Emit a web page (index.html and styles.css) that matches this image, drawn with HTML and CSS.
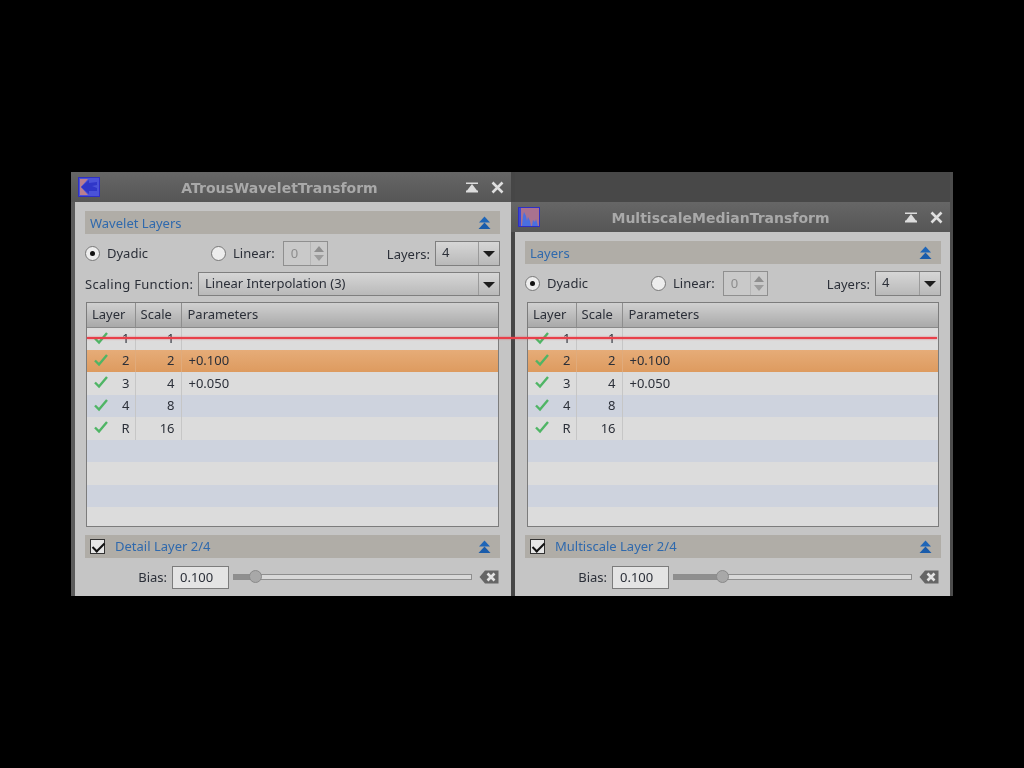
FILE: index.html
```html
<!DOCTYPE html>
<html lang="en">
<head>
  <meta charset="UTF-8" />
  <title>Wavelet and median transform</title>
  <link rel="stylesheet" href="styles.css">
</head>
<body>
  <svg class="defs" width="0" height="0">
    <defs>
      <symbol id="check" viewBox="0 0 16 14">
        <path d="M2 7.5 L6 11.5 L14 2" fill="none" stroke="#4fb565" stroke-width="2.4"/>
      </symbol>
      <symbol id="shade" viewBox="0 0 14 11">
        <path d="M1 0.5 H13 V2 H1 Z M7 2 L12 8.5 H2 Z M1 8.5 H13 V10.5 H1 Z" fill="#dcdcdc"/>
      </symbol>
      <symbol id="close" viewBox="0 0 13 13">
        <path d="M1.5 1.5 L11.5 11.5 M11.5 1.5 L1.5 11.5" stroke="#dedede" stroke-width="2.6" fill="none"/>
      </symbol>
      <symbol id="collapse" viewBox="0 0 13 14">
        <path d="M6.5 0.5 L12 6.5 H1 Z" fill="#1f66b8"/>
        <path d="M6.5 6.5 L12.5 13 H0.5 Z" fill="#1a5cab"/>
      </symbol>
      <symbol id="clear" viewBox="0 0 20 14">
        <path d="M6 0.5 H19.5 V13.5 H6 L0.5 7 Z" fill="#666"/>
        <path d="M8.5 3.5 L15.5 10.5 M15.5 3.5 L8.5 10.5" stroke="#e4e4e4" stroke-width="2.6" fill="none"/>
      </symbol>
    </defs>
  </svg>

  <div class="stage">
    <section class="window window-left">
      <div class="titlebar">
        <svg class="app-icon" viewBox="0 0 22 20">
          <rect x="0.5" y="0.5" width="21" height="19" fill="#4a52d8" stroke="#2e2fc4"/>
          <path d="M2 2 H10 L3 10 L10 18 H2 Z" fill="#b97f8f"/>
          <path d="M3 10 L11 3 V6 L19 5 V8 L14 9 L19 11 V14 L11 14 V17 Z" fill="#2f36c8"/>
        </svg>
        <span class="title">ATrousWaveletTransform</span>
        <svg class="btn-shade"><use href="#shade"/></svg>
        <svg class="btn-close"><use href="#close"/></svg>
      </div>
      <div class="body">
        <div class="section">
          <span class="section-name">Wavelet Layers</span>
          <svg class="collapse"><use href="#collapse"/></svg>
        </div>
        <div class="row row-options">
          <span class="radio radio-on"></span><span class="opt-label">Dyadic</span>
          <span class="radio radio-linear"></span><span class="opt-label">Linear:</span>
          <div class="spin"><span class="spin-value">0</span><span class="spin-btns"><i class="up"></i><i class="down"></i></span></div>
          <span class="layers-label">Layers:</span>
          <div class="combo combo-layers"><span class="combo-value">4</span><span class="combo-arrow"></span></div>
        </div>
        <div class="row row-scaling">
          <span class="scaling-label">Scaling Function:</span>
          <div class="combo combo-wide"><span class="combo-value">Linear Interpolation (3)</span><span class="combo-arrow"></span></div>
        </div>
        <div class="table-box">
          <table class="layers">
            <thead>
              <tr><th class="col-layer">Layer</th><th class="col-scale">Scale</th><th>Parameters</th></tr>
            </thead>
            <tbody>
              <tr><td class="col-layer"><svg class="check"><use href="#check"/></svg>1</td><td class="col-scale">1</td><td></td></tr>
              <tr class="selected"><td class="col-layer"><svg class="check"><use href="#check"/></svg>2</td><td class="col-scale">2</td><td>+0.100</td></tr>
              <tr><td class="col-layer"><svg class="check"><use href="#check"/></svg>3</td><td class="col-scale">4</td><td>+0.050</td></tr>
              <tr class="alt"><td class="col-layer"><svg class="check"><use href="#check"/></svg>4</td><td class="col-scale">8</td><td></td></tr>
              <tr><td class="col-layer"><svg class="check"><use href="#check"/></svg>R</td><td class="col-scale">16</td><td></td></tr>
            </tbody>
          </table>
          <div class="empty-row alt"></div>
          <div class="empty-row"></div>
          <div class="empty-row alt"></div>
          <div class="empty-row"></div>
        </div>
        <div class="section section-detail">
          <span class="checkbox"></span>
          <span class="section-name">Detail Layer 2/4</span>
          <svg class="collapse"><use href="#collapse"/></svg>
        </div>
        <div class="row row-bias">
          <span class="bias-label">Bias:</span>
          <span class="bias-field">0.100</span>
          <div class="slider"><span class="slider-fill slider-fill-left"></span><span class="thumb thumb-left"></span></div>
          <svg class="clear"><use href="#clear"/></svg>
        </div>
      </div>
    </section>

    <section class="window window-right">
      <div class="titlebar">
        <svg class="app-icon" viewBox="0 0 22 20">
          <rect x="0.5" y="0.5" width="21" height="19" fill="#a9728f" stroke="#2e2fc4"/>
          <path d="M1 1 H3 V19 H1 Z" fill="#3a48d8"/>
          <path d="M4 19 L5 9 L6 5 L8 9 L9 14 L10 10 L12 14 L13 19 Z M14 19 L15 13 L17 15 L18 12 L20 19 Z" fill="#4a6fe0"/>
        </svg>
        <span class="title">MultiscaleMedianTransform</span>
        <svg class="btn-shade"><use href="#shade"/></svg>
        <svg class="btn-close"><use href="#close"/></svg>
      </div>
      <div class="body">
        <div class="section">
          <span class="section-name">Layers</span>
          <svg class="collapse"><use href="#collapse"/></svg>
        </div>
        <div class="row row-options">
          <span class="radio radio-on"></span><span class="opt-label">Dyadic</span>
          <span class="radio radio-linear"></span><span class="opt-label">Linear:</span>
          <div class="spin"><span class="spin-value">0</span><span class="spin-btns"><i class="up"></i><i class="down"></i></span></div>
          <span class="layers-label">Layers:</span>
          <div class="combo combo-layers"><span class="combo-value">4</span><span class="combo-arrow"></span></div>
        </div>
        <div class="table-box">
          <table class="layers">
            <thead>
              <tr><th class="col-layer">Layer</th><th class="col-scale">Scale</th><th>Parameters</th></tr>
            </thead>
            <tbody>
              <tr><td class="col-layer"><svg class="check"><use href="#check"/></svg>1</td><td class="col-scale">1</td><td></td></tr>
              <tr class="selected"><td class="col-layer"><svg class="check"><use href="#check"/></svg>2</td><td class="col-scale">2</td><td>+0.100</td></tr>
              <tr><td class="col-layer"><svg class="check"><use href="#check"/></svg>3</td><td class="col-scale">4</td><td>+0.050</td></tr>
              <tr class="alt"><td class="col-layer"><svg class="check"><use href="#check"/></svg>4</td><td class="col-scale">8</td><td></td></tr>
              <tr><td class="col-layer"><svg class="check"><use href="#check"/></svg>R</td><td class="col-scale">16</td><td></td></tr>
            </tbody>
          </table>
          <div class="empty-row alt"></div>
          <div class="empty-row"></div>
          <div class="empty-row alt"></div>
          <div class="empty-row"></div>
        </div>
        <div class="section section-detail">
          <span class="checkbox"></span>
          <span class="section-name">Multiscale Layer 2/4</span>
          <svg class="collapse"><use href="#collapse"/></svg>
        </div>
        <div class="row row-bias">
          <span class="bias-label">Bias:</span>
          <span class="bias-field">0.100</span>
          <div class="slider"><span class="slider-fill slider-fill-right"></span><span class="thumb thumb-right"></span></div>
          <svg class="clear"><use href="#clear"/></svg>
        </div>
      </div>
    </section>

    <div class="red-line"></div>
  </div>
</body>
</html>
```

FILE: styles.css
```css
* {
  box-sizing: border-box;
}

body {
  margin: 0;
  height: 768px;
  overflow: hidden;
  background: #000;
  font-family: "Noto Sans", Arial, sans-serif;
  font-size: 13px;
  color: #2b2f38;
}

.defs {
  position: absolute;
}

.stage {
  position: relative;
  display: flex;
  width: 882px;
  height: 424px;
  margin: 172px 0 0 71px;
  filter: blur(0.5px);
}

/* windows */
.window {
  display: flex;
  flex-direction: column;
  height: 424px;
  background: #c5c5c5;
}

.window-left {
  width: 440px;
  border-left: 4px solid #5c5c5c;
}

.window-right {
  width: 442px;
  padding-top: 30px;
  background: linear-gradient(#484848 30px, #c5c5c5 30px);
  border-left: 4px solid #464646;
  border-right: 3px solid #4c4c4c;
}

.window-right .body {
  padding: 9px 9px 0 10px;
}

.titlebar {
  display: flex;
  flex: none;
  align-items: center;
  height: 30px;
  margin-left: -4px;
  padding: 0 7px;
  background: linear-gradient(#666, #565656);
}

.app-icon {
  flex: none;
  width: 22px;
  height: 20px;
}

.title {
  flex: 1;
  padding: 2px 6px 0 0;
  text-align: center;
  font-family: "DejaVu Sans", sans-serif;
  font-weight: bold;
  font-size: 14px;
  color: #a9a9a9;
}

.window-right .title {
  padding-right: 3px;
}

.btn-shade {
  width: 14px;
  height: 11px;
  margin-right: 12px;
}

.btn-close {
  width: 13px;
  height: 13px;
}

.body {
  flex: 1;
  padding: 9px 11px 0 10px;
}

/* section bars */
.section {
  display: flex;
  align-items: center;
  height: 23px;
  padding: 0 9px 0 5px;
  background: #b0ada7;
}

.section-name {
  flex: 1;
  color: #2f69ad;
}

.collapse {
  width: 13px;
  height: 14px;
}

.section-detail {
  margin-top: 8px;
}

.section-detail .section-name {
  padding-bottom: 1px;
}

.checkbox {
  position: relative;
  width: 15px;
  height: 15px;
  margin-right: 10px;
  background: #e6e6e6;
  border: 1px solid #333;
}

.checkbox::after {
  content: "";
  position: absolute;
  left: 4px;
  top: 0;
  width: 5px;
  height: 10px;
  border: solid #111;
  border-width: 0 2px 2px 0;
  transform: rotate(45deg);
}

/* form rows */
.row {
  display: flex;
  align-items: center;
}

.row-options {
  height: 25px;
  margin-top: 7px;
}

.radio {
  flex: none;
  position: relative;
  width: 15px;
  height: 15px;
  margin-right: 7px;
  border: 1px solid #777;
  border-radius: 50%;
  background: #ededed;
}

.radio-on::after {
  content: "";
  position: absolute;
  left: 4px;
  top: 4px;
  width: 5px;
  height: 5px;
  border-radius: 50%;
  background: #111;
}

.radio-linear {
  margin-left: 63px;
}

.opt-label {
  line-height: 25px;
}

.spin {
  display: flex;
  width: 45px;
  height: 25px;
  margin-left: 8px;
  border: 1px solid #8f8f8f;
  background: #c9c9c9;
}

.spin-value {
  flex: 1;
  padding-left: 7px;
  line-height: 23px;
  color: #8d8d8d;
}

.spin-btns {
  display: flex;
  flex-direction: column;
  align-items: center;
  justify-content: center;
  gap: 3px;
  width: 17px;
  border-left: 1px solid #b5b5b5;
}

.spin-btns i {
  width: 0;
  height: 0;
  border-left: 5px solid transparent;
  border-right: 5px solid transparent;
}

.spin-btns .up {
  border-bottom: 6px solid #8f8f8f;
}

.spin-btns .down {
  border-top: 6px solid #9c9c9c;
}

.layers-label {
  margin-left: auto;
  margin-right: 5px;
}

.combo {
  display: flex;
  height: 25px;
  border: 1px solid #7f7f7f;
  background: linear-gradient(#d6d6d6, #b9b9b9);
}

.combo-layers {
  width: 65px;
}

.window-right .combo-layers {
  width: 66px;
}

.combo-wide {
  flex: 1;
  height: 24px;
}

.combo-value {
  flex: 1;
  padding-left: 6px;
  line-height: 21px;
}

.combo-arrow {
  position: relative;
  width: 21px;
  border-left: 1px solid #9a9a9a;
}

.combo-arrow::after {
  content: "";
  position: absolute;
  left: 4px;
  top: 9px;
  border-left: 6px solid transparent;
  border-right: 6px solid transparent;
  border-top: 6px solid #1c1c1c;
}

.row-scaling {
  margin-top: 6px;
}

.scaling-label {
  width: 113px;
  padding-bottom: 1px;
  letter-spacing: 0.3px;
}

/* table */
.table-box {
  height: 225px;
  margin: 6px 1px 0;
  border: 1px solid #7c7c7c;
  background: #dcdcdc;
  overflow: hidden;
}

.window-right .table-box {
  margin: 6px 2px 0;
}

.layers {
  width: 100%;
  table-layout: fixed;
  border-collapse: collapse;
}

.layers th {
  height: 24px;
  padding: 0 0 2px 5px;
  text-align: left;
  font-weight: normal;
  background: linear-gradient(#d0d0d0, #a9a9a9);
  border-right: 1px solid #8e8e8e;
  border-bottom: 1px solid #8a8a8a;
}

.layers td {
  height: 22.5px;
  padding: 0 0 1px 7px;
  border-right: 1px solid #c6c6c6;
}

.layers th:last-child,
.layers td:last-child {
  border-right: none;
}

.layers th:last-child {
  padding-left: 6px;
}

.col-layer {
  width: 48px;
}

.col-scale {
  width: 46px;
}

.layers td.col-layer {
  position: relative;
  text-align: right;
  padding-right: 5px;
}

.layers td.col-scale {
  text-align: right;
  padding-right: 6px;
}

.check {
  position: absolute;
  left: 6px;
  top: 3px;
  width: 16px;
  height: 14px;
}

.alt {
  background: #ced3de;
}

.selected {
  background: linear-gradient(#e6ac78, #dd9a5e);
}

.selected td {
  border-right-color: #e0ab7c;
}

.empty-row {
  height: 22.5px;
}

/* bias row */
.row-bias {
  height: 23px;
  margin-top: 8px;
}

.bias-label {
  width: 87px;
  padding: 0 5px 1px 0;
  text-align: right;
}

.bias-field {
  width: 57px;
  height: 23px;
  padding-left: 7px;
  line-height: 20px;
  border: 1px solid #7c7c7c;
  background: #e4e4e4;
}

.slider {
  position: relative;
  flex: none;
  width: 239px;
  height: 6px;
  margin: 0 0 2px 4px;
  border: 1px solid #8e8e8e;
  background: #d8d8d8;
}

.slider-fill {
  position: absolute;
  left: 0;
  top: 0;
  height: 4px;
  background: #8f8f8f;
}

.slider-fill-left {
  width: 20px;
}

.slider-fill-right {
  width: 47px;
}

.thumb {
  position: absolute;
  top: -5px;
  width: 13px;
  height: 13px;
  border-radius: 50%;
  border: 1px solid #8a8a8a;
  background: #a8a8a8;
}

.thumb-left {
  left: 15px;
}

.thumb-right {
  left: 42px;
}

.clear {
  width: 20px;
  height: 14px;
  margin: 0 0 2px 7px;
}

/* red guide drawn over both windows */
.red-line {
  position: absolute;
  left: 16px;
  top: 165px;
  width: 850px;
  height: 2px;
  background: #e8404a;
  box-shadow: 0 0 2px rgba(232, 64, 74, 0.7);
}
```
